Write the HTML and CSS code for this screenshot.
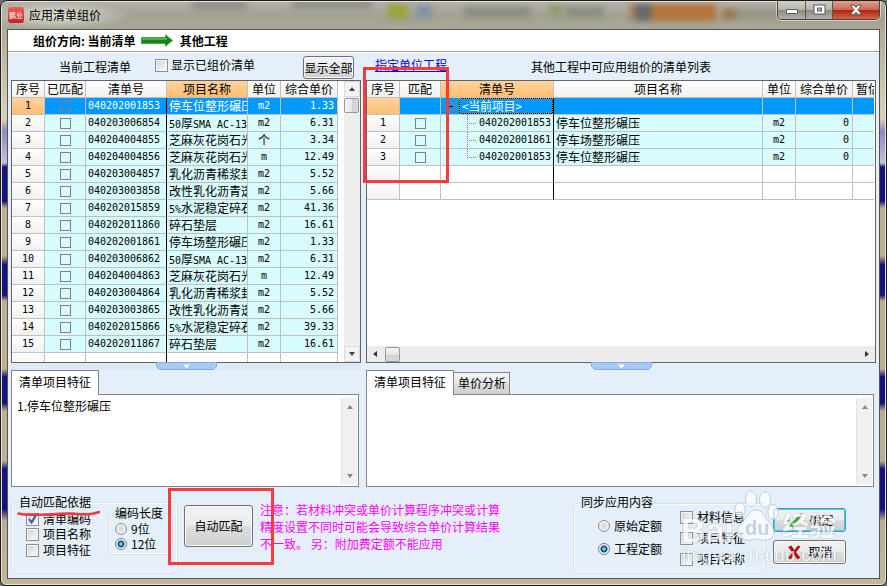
FILE: index.html
```html
<!DOCTYPE html>
<html lang="zh-CN">
<head>
    <meta charset="UTF-8">
    <meta name="viewport" content="width=device-width, initial-scale=1.0">
    <title>应用清单组价</title>
    <link rel="stylesheet" href="styles.css">
</head>
<body>
<div class="window">
    <div class="titlebar">
        <div class="glass">
            <i class="blur b1"></i><i class="blur b2"></i><i class="blur b3"></i><i class="blur b4"></i>
            <i class="blur b5"></i><i class="blur b6"></i><i class="blur b7"></i><i class="blur b8"></i>
            <i class="blur b9"></i>
        </div>
        <span class="app-icon">鹏业</span>
        <span class="title">应用清单组价</span>
        <div class="controls">
            <span class="ctl"><svg width="14" height="12"><rect x="1.5" y="5.5" width="11" height="4" rx="0.5" fill="#fff" stroke="#555b6b"/></svg></span>
            <span class="ctl"><svg width="13" height="12"><rect x="1" y="1" width="11" height="9" fill="#fff" stroke="#555b6b"/><rect x="4.5" y="4" width="4" height="3" fill="#b9b6a8" stroke="#555b6b"/></svg></span>
            <span class="ctl close"><svg width="14" height="12"><path d="M1.5 1h3.6L7 3.4 8.9 1h3.6L9 5.8l3.7 4.9H9L7 8.3l-2 2.4H1.3L5 5.8z" fill="#fff" stroke="#5b4a52"/></svg></span>
        </div>
    </div>

    <div class="client">
        <div class="direction">
            <span>组价方向: 当前清单</span>
            <svg class="arrow" width="32" height="13">
                <path d="M0.5 3.5h24V0.8l7 5.7-7 5.7V9.5h-24z" fill="#178217" stroke="#3f9a3f" stroke-width="0.8"/>
                <path d="M1 5h25" stroke="#8fd08f"/>
            </svg>
            <span>其他工程</span>
        </div>

        <div class="panes">
            <div class="pane">
                <div class="pane-head left-head">
                    <span class="caption">当前工程清单</span>
                    <label class="check-label"><i class="cb"></i>显示已组价清单</label>
                    <span class="btn show-all">显示全部</span>
                </div>
                <div class="grid">
                    <div class="rows left-rows">
                        <div class="row head"><b>序号</b><b>已匹配</b><b>清单号</b><b class="hot">项目名称</b><b>单位</b><b>综合单价</b></div>
                        <div class="row sel"><b>1</b><s><i class="box"></i></s><s class="code">040202001853</s><s class="name">停车位整形碾压</s><s class="unit">m2</s><s class="num">1.33</s></div>
                        <div class="row"><b>2</b><s><i class="box"></i></s><s class="code">040203006854</s><s class="name"><u>50</u>厚<u>SMA AC-13</u></s><s class="unit">m2</s><s class="num">6.31</s></div>
                        <div class="row"><b>3</b><s><i class="box"></i></s><s class="code">040204004855</s><s class="name">芝麻灰花岗石光面</s><s class="unit cn">个</s><s class="num">3.34</s></div>
                        <div class="row"><b>4</b><s><i class="box"></i></s><s class="code">040204004856</s><s class="name">芝麻灰花岗石光面</s><s class="unit">m</s><s class="num">12.49</s></div>
                        <div class="row"><b>5</b><s><i class="box"></i></s><s class="code">040203004857</s><s class="name">乳化沥青稀浆封层</s><s class="unit">m2</s><s class="num">5.52</s></div>
                        <div class="row"><b>6</b><s><i class="box"></i></s><s class="code">040203003858</s><s class="name">改性乳化沥青透层</s><s class="unit">m2</s><s class="num">5.66</s></div>
                        <div class="row"><b>7</b><s><i class="box"></i></s><s class="code">040202015859</s><s class="name"><u>5%</u>水泥稳定碎石</s><s class="unit">m2</s><s class="num">41.36</s></div>
                        <div class="row"><b>8</b><s><i class="box"></i></s><s class="code">040202011860</s><s class="name">碎石垫层</s><s class="unit">m2</s><s class="num">16.61</s></div>
                        <div class="row"><b>9</b><s><i class="box"></i></s><s class="code">040202001861</s><s class="name">停车场整形碾压</s><s class="unit">m2</s><s class="num">1.33</s></div>
                        <div class="row"><b>10</b><s><i class="box"></i></s><s class="code">040203006862</s><s class="name"><u>50</u>厚<u>SMA AC-13</u></s><s class="unit">m2</s><s class="num">6.31</s></div>
                        <div class="row"><b>11</b><s><i class="box"></i></s><s class="code">040204004863</s><s class="name">芝麻灰花岗石光面</s><s class="unit">m</s><s class="num">12.49</s></div>
                        <div class="row"><b>12</b><s><i class="box"></i></s><s class="code">040203004864</s><s class="name">乳化沥青稀浆封层</s><s class="unit">m2</s><s class="num">5.52</s></div>
                        <div class="row"><b>13</b><s><i class="box"></i></s><s class="code">040203003865</s><s class="name">改性乳化沥青透层</s><s class="unit">m2</s><s class="num">5.66</s></div>
                        <div class="row"><b>14</b><s><i class="box"></i></s><s class="code">040202015866</s><s class="name"><u>5%</u>水泥稳定碎石</s><s class="unit">m2</s><s class="num">39.33</s></div>
                        <div class="row"><b>15</b><s><i class="box"></i></s><s class="code">040202011867</s><s class="name">碎石垫层</s><s class="unit">m2</s><s class="num">16.61</s></div>
                        <div class="row empty"><b></b><s></s><s class="code"></s><s></s><s></s><s></s></div>
                    </div>
                    <div class="vscroll">
                        <span class="sbtn"><i class="up"></i></span>
                        <span class="thumb"></span>
                        <span class="sbtn end"><i class="down"></i></span>
                    </div>
                </div>
                <div class="split tint"><svg width="61" height="8"><path d="M0.5 0.5h60v4l-3 3h-54l-3-3z" fill="#a9cbf3" stroke="#7eaee6"/><path d="M27 2.5h7l-3.5 4z" fill="#fff"/></svg></div>
                <div class="tabs"><span class="tab on">清单项目特征</span></div>
                <div class="memo left-memo">
                    <p>1.停车位整形碾压</p>
                    <div class="mscroll"><i class="up"></i><i class="down"></i></div>
                </div>
            </div>

            <div class="pane">
                <div class="pane-head right-head">
                    <span class="link">指定单位工程</span>
                    <span class="caption">其他工程中可应用组价的清单列表</span>
                </div>
                <div class="grid right-grid">
                    <div class="rows right-rows">
                        <div class="row head"><b>序号</b><b>匹配</b><b class="hot">清单号</b><b>项目名称</b><b>单位</b><b>综合单价</b><b class="cut">暂估</b></div>
                        <div class="row sel"><b></b><s></s><s class="code root"><i class="minus"></i><em>&lt;当前项目&gt;</em></s><s></s><s></s><s></s><s></s></div>
                        <div class="row"><b>1</b><s><i class="box"></i></s><s class="code leaf">040202001853</s><s class="name">停车位整形碾压</s><s class="unit">m2</s><s class="num">0</s><s></s></div>
                        <div class="row"><b>2</b><s><i class="box"></i></s><s class="code leaf">040202001861</s><s class="name">停车场整形碾压</s><s class="unit">m2</s><s class="num">0</s><s></s></div>
                        <div class="row"><b>3</b><s><i class="box"></i></s><s class="code leaf last">040202001853</s><s class="name">停车位整形碾压</s><s class="unit">m2</s><s class="num">0</s><s></s></div>
                        <div class="row empty"><b></b><s></s><s class="code"></s><s></s><s></s><s></s><s></s></div>
                        <div class="row empty"><b></b><s></s><s class="code"></s><s></s><s></s><s></s><s></s></div>
                    </div>
                    <div class="hscroll"><i class="left"></i><span class="hthumb"></span><i class="right"></i></div>
                </div>
                <div class="split"><svg width="61" height="8"><path d="M0.5 0.5h60v4l-3 3h-54l-3-3z" fill="#a9cbf3" stroke="#7eaee6"/><path d="M27 2.5h7l-3.5 4z" fill="#fff"/></svg></div>
                <div class="tabs"><span class="tab on">清单项目特征</span><span class="tab off">单价分析</span></div>
                <div class="memo right-memo">
                    <p></p>
                    <div class="mscroll"><i class="up"></i><i class="down"></i></div>
                </div>
            </div>
        </div>

        <div class="footer">
            <div class="group basis">
                <span class="legend">自动匹配依据</span>
                <div class="checks">
                    <label><i class="cb"><svg width="11" height="11"><path d="M2 5l2.6 3.4L8.8 1.6" fill="none" stroke="#3c5aa6" stroke-width="2"/></svg></i>清单编码</label>
                    <label><i class="cb"></i>项目名称</label>
                    <label><i class="cb"></i>项目特征</label>
                </div>
                <div class="group length">
                    <span class="legend">编码长度</span>
                    <label><i class="rb"></i>9位</label>
                    <label><i class="rb on"></i>12位</label>
                </div>
            </div>
            <span class="btn auto">自动匹配</span>
            <p class="note">注意：若材料冲突或单价计算程序冲突或计算<br>精度设置不同时可能会导致综合单价计算结果<br>不一致。 另：附加费定额不能应用</p>
            <div class="group sync">
                <span class="legend">同步应用内容</span>
                <div class="radios">
                    <label><i class="rb"></i>原始定额</label>
                    <label><i class="rb on"></i>工程定额</label>
                </div>
                <div class="options">
                    <label><i class="cb"></i>材料信息</label>
                    <label><i class="cb"></i>项目特征</label>
                    <label><i class="cb"></i>项目名称</label>
                </div>
            </div>
            <div class="actions">
                <span class="btn ok"><svg width="17" height="15"><path d="M1 8.5l3-1.8 2.4 3.1L15 0.5l1.2 0.6L7.2 14H5.4z" fill="#16b41c" stroke="#0a7a10" stroke-width="0.6"/></svg>确定</span>
                <span class="btn cancel"><svg width="15" height="15"><path d="M1 2l3.5-1.5L7.3 5 11 0.5l2.5 1L9 7.2l4.4 5.6-3 1.7-3.2-4.8-3.4 4.8-2.8-1.6L5.4 7.4z" fill="#b40d12"/></svg>取消</span>
            </div>
        </div>
    </div>

    <div class="mark mark-match"></div>
    <div class="mark mark-auto"></div>
    <svg class="mark-line" width="84" height="8"><path d="M1.5 4.5C7 6.5 18 5.8 30 5.6S48 4 56 4.6s16 2.4 26-1.6" fill="none" stroke="#f8383c" stroke-width="2.6" stroke-linecap="round"/></svg>

    <div class="watermark">
        <svg width="46" height="54">
            <g fill="#fff" stroke="#b4c0cc">
                <ellipse cx="17" cy="9" rx="5.5" ry="8"/>
                <ellipse cx="31" cy="9.5" rx="5.5" ry="8"/>
                <ellipse cx="6" cy="20" rx="5.2" ry="7.5"/>
                <ellipse cx="39" cy="22" rx="5.2" ry="7.5"/>
                <path d="M22 20c7 0 8 7 13 12 6 5 8 17-2 18-5 1-8-1-11-1s-7 2-12 1C1 48 2 37 8 32s7-12 14-12z"/>
            </g>
        </svg>
        <span class="wm-bai">Bai</span><span class="wm-du">du</span><span class="wm-jy">经验</span>
        <span class="wm-url">jingyan.baidu.com</span>
    </div>
</div>
</body>
</html>
```
FILE: styles.css
```css
* {
    box-sizing: border-box;
}

body {
    margin: 0;
    width: 887px;
    height: 586px;
    overflow: hidden;
    background: #6d6e70;
    font: 12px/16px "Noto Sans CJK SC", sans-serif;
    color: #000;
}

i, em {
    font-style: normal;
}

b {
    font-weight: normal;
}

s, u {
    text-decoration: none;
}

.window {
    position: relative;
    width: 887px;
    height: 586px;
    padding: 0 6px;
    border: 1px solid #1c1c1c;
    border-radius: 7px 7px 6px 6px;
    box-shadow: inset 0 0 0 1px #e4e2da;
    overflow: hidden;
    background: linear-gradient(#a5a493 0, #b1ad99 30px, #c9c5ae 85px, #d9d3b4 118px, #8d88c4 130px, #c3c0da 162px, #15117e 166px, #15117e 200px, #bcae90 207px, #bcae90 255px, #15117e 264px, #15117e 294px, #bcae90 300px, #bcae90 368px, #15117e 376px, #15117e 402px, #bcae90 410px, #bcae90 460px, #15117e 468px, #15117e 508px, #bcae90 520px, #bfb497 570px, #c2b799 100%);
}

/* title bar */
.titlebar {
    display: flex;
    height: 28px;
}

.glass {
    position: absolute;
    left: 1px;
    top: 1px;
    right: 1px;
    height: 27px;
    overflow: hidden;
    background: linear-gradient(#b4b2ab, #a3a294 50%, #a8a898);
}

.glass::before {
    content: "";
    position: absolute;
    left: -20px;
    top: 0;
    width: 150px;
    height: 27px;
    background: radial-gradient(ellipse, rgba(235, 235, 228, 0.85), rgba(235, 235, 228, 0) 70%);
}

.blur {
    position: absolute;
    top: 5px;
    height: 10px;
    filter: blur(3px);
    background: #8b8a80;
}

.b1 { left: 190px; width: 55px; top: 0; height: 7px; }
.b2 { left: 290px; width: 80px; top: -2px; height: 8px; }
.b3 { left: 386px; width: 20px; top: 2px; height: 15px; background: #9aa33c; }
.b4 { left: 414px; width: 16px; top: 3px; height: 13px; background: #8294a6; }
.b5 { left: 462px; width: 66px; }
.b6 { left: 548px; width: 12px; top: 3px; background: #8e9862; }
.b7 { left: 564px; width: 38px; }
.b8 { left: 628px; width: 86px; top: 2px; height: 17px; background: linear-gradient(90deg, #a97c50 0 4px, #62676d 7px 18px, #b5743a 24px); }
.b9 { left: 720px; width: 60px; top: 7px; background: linear-gradient(90deg, #9b7446 0 12px, #999588 16px); }

.app-icon {
    position: relative;
    width: 16px;
    height: 16px;
    margin: 6px 0 0 1px;
    border-radius: 3px;
    background: linear-gradient(#f05f5b, #c71e22);
    color: #fff;
    font-size: 7px;
    line-height: 16px;
    text-align: center;
    white-space: nowrap;
}

.title {
    position: relative;
    margin: 6px 0 0 5px;
}

.controls {
    position: relative;
    display: flex;
    width: 103px;
    height: 19px;
    margin: 0 0 0 auto;
    border: 1px solid #494641;
    border-top: 0;
    border-radius: 0 0 5px 5px;
    box-shadow: 0 0 0 1px rgba(255, 255, 255, 0.5);
    overflow: hidden;
}

.ctl {
    display: flex;
    width: 28px;
    align-items: center;
    justify-content: center;
    border-right: 1px solid #5c5953;
    background: linear-gradient(#d0cec7, #b7b4aa 48%, #8d8a80 52%, #b5b2a7);
}

.ctl:nth-child(2) {
    width: 27px;
}

.close {
    flex: 1;
    border-right: 0;
    background: linear-gradient(#dfa08f, #cc6a55 48%, #b2270f 52%, #d5624a);
}

.client {
    height: 550px;
    border: 1px solid #55544e;
    background: #e5effa;
}

.direction {
    display: flex;
    height: 23px;
    padding-left: 25px;
    background: #fff;
    border-bottom: 1px solid #fff;
    box-shadow: inset 0 -1px 0 #a0a0a0;
    font-weight: bold;
    line-height: 21px;
}

.arrow {
    margin: 4px 7px 0 5px;
}

/* two halves */
.panes {
    display: grid;
    grid-template-columns: 350px 510px;
    column-gap: 5px;
    padding-left: 3px;
}

.pane-head {
    display: flex;
    height: 27px;
}

.caption {
    padding-top: 6px;
}

.left-head .caption {
    margin-left: 48px;
}

.right-head .caption {
    margin-left: 84px;
}

.check-label {
    display: flex;
    gap: 3px;
    margin: 4px 0 0 24px;
}

.check-label .cb {
    margin-top: 2px;
}

.cb {
    flex: none;
    width: 13px;
    height: 13px;
    border: 1px solid #8e8f8f;
    background: linear-gradient(135deg, #cbcfd5, #f6f6f6 80%);
    box-shadow: inset 0 0 0 1px #f4f4f4;
}

.cb svg {
    display: block;
}

.btn {
    display: flex;
    align-items: center;
    justify-content: center;
    border: 1px solid #707070;
    border-radius: 3px;
    background: linear-gradient(#f2f2f2, #ebebeb 49%, #dddddd 51%, #cfcfcf);
    box-shadow: inset 0 0 0 1px #fafafa;
    white-space: nowrap;
}

.show-all {
    width: 51px;
    height: 23px;
    margin: 3px 7px 0 auto;
}

.link {
    height: 16px;
    margin: 4px 0 0 9px;
    color: #0000ff;
    text-decoration: underline;
}

/* data grids */
.grid {
    display: flex;
    height: 283px;
    border: 1px solid #646464;
    background: #fff;
    overflow: hidden;
}

.right-grid {
    flex-direction: column;
}

.rows {
    overflow: hidden;
}

.row {
    display: grid;
    height: 17px;
}

.left-rows .row {
    grid-template-columns: 33px 41px 81px 81px 33px 57px;
}

.left-rows {
    width: 332px;
}

.right-rows .row {
    grid-template-columns: 33px 41px 113px 209px 33px 57px 21px;
}

.row b, .row s {
    height: 17px;
    border-right: 1px solid #c0c0c0;
    border-bottom: 1px solid #c0c0c0;
    line-height: 16px;
    text-align: center;
    white-space: nowrap;
    overflow: hidden;
}

.row b {
    background: linear-gradient(#fff, #f0f0f0);
    font-family: "DejaVu Sans Mono", "Noto Sans CJK SC", monospace;
    font-size: 10px;
}

.row.head b {
    font-family: "Noto Sans CJK SC", sans-serif;
    font-size: 12px;
    line-height: 16px;
}

.row s {
    background: #d8fbfe;
}

.row.head .hot, .row.sel b {
    background: linear-gradient(#ffd49c, #ffbe72);
}

.row.sel s {
    background: #0099ff;
    color: #fff;
}

.row.empty s {
    background: #fff;
}

.row .code {
    padding-left: 2px;
    text-align: left;
    border-right-color: #000;
}

.row .code, .row .unit, .row .num, .row u {
    font-family: "DejaVu Sans Mono", "Noto Sans CJK SC", monospace;
    font-size: 10px;
    letter-spacing: -0.02px;
}

.row .cn {
    font-family: "Noto Sans CJK SC", sans-serif;
    font-size: 12px;
}

.row .name {
    padding-left: 2px;
    text-align: left;
    line-height: 16px;
}

.row .num {
    padding-right: 3px;
    text-align: right;
}

.row .cut {
    padding-left: 3px;
    text-align: left;
    border-right: 0;
}

.row s:nth-child(7) {
    border-right: 0;
}

.box {
    display: block;
    width: 11px;
    height: 11px;
    margin: 3px auto 0;
    border: 1px solid #808080;
}

.row .root {
    display: flex;
    padding: 0 0 0 5px;
    font-family: "Noto Sans CJK SC", sans-serif;
    font-size: 12px;
}

.root em {
    flex: 1;
    height: 16px;
    margin-left: 4px;
    padding-left: 2px;
    border: 1px dotted #ff7a1a;
    background: linear-gradient(#0099ff, #0099ff) padding-box, linear-gradient(#111, #111) border-box;
    line-height: 14px;
    letter-spacing: -0.3px;
}

.minus {
    width: 9px;
    height: 9px;
    margin-top: 4px;
    border: 1px solid #808080;
    background: linear-gradient(#111, #111) center / 4px 1px no-repeat;
}

.row .leaf {
    padding-left: 38px;
    background-image:
        repeating-linear-gradient(90deg, #808080 0 1px, transparent 1px 2px),
        repeating-linear-gradient(#808080 0 1px, transparent 1px 2px);
    background-repeat: no-repeat;
    background-size: 10px 1px, 1px 17px;
    background-position: 26px 8px, 26px 0;
}

.row .last {
    background-size: 10px 1px, 1px 9px;
}

/* scroll bars */
.vscroll {
    display: flex;
    flex-direction: column;
    width: 16px;
    background: #eee;
}

.sbtn {
    display: flex;
    align-items: center;
    justify-content: center;
    height: 16px;
    border: 1px solid #dcdcdc;
    background: #f2f2f2;
}

.end {
    margin-top: auto;
}

.thumb {
    width: 15px;
    height: 15px;
    margin-top: 1px;
    border: 1px solid #979797;
    border-radius: 2px;
    background: linear-gradient(90deg, #f5f5f5, #e6e6e6 50%, #cfcfcf 52%, #dcdcdc);
}

.up, .down {
    border: 3px solid transparent;
    border-top: 0;
    border-bottom: 4px solid #444;
}

.down {
    border: 3px solid transparent;
    border-bottom: 0;
    border-top: 4px solid #444;
}

.hscroll {
    display: flex;
    align-items: center;
    height: 16px;
    margin-top: auto;
    padding: 0 6px;
    background: #ececec;
}

.left, .right {
    border: 3px solid transparent;
    border-left: 0;
    border-right: 4px solid #333;
}

.right {
    margin-left: auto;
    border: 3px solid transparent;
    border-right: 0;
    border-left: 4px solid #333;
}

.hthumb {
    width: 15px;
    height: 15px;
    margin-left: 8px;
    border: 1px solid #979797;
    border-radius: 2px;
    background: linear-gradient(#f5f5f5, #e6e6e6 50%, #cfcfcf 52%, #dcdcdc);
}

.split {
    display: flex;
    height: 7px;
    justify-content: center;
}

.split svg {
    flex: none;
    margin-top: -1px;
}

.tint {
    background: #dceaf8;
}

/* tabs and text boxes */
.tabs {
    display: flex;
    height: 24px;
    align-items: flex-end;
}

.tab {
    border: 1px solid #82838f;
    border-bottom: 0;
    white-space: nowrap;
}

.tab.on {
    position: relative;
    width: 88px;
    height: 25px;
    margin-bottom: -1px;
    padding: 3px 0 0 7px;
    background: #fff;
}

.tab.off {
    width: 56px;
    height: 22px;
    padding: 2px 0 0 4px;
    border-left: 0;
    background: linear-gradient(#f3f3f3, #ebebeb 49%, #dddddd 51%, #d0d0d0);
}

.memo {
    display: flex;
    justify-content: space-between;
    height: 93px;
    border: 1px solid #82838f;
    background: #fff;
}

.left-memo {
    width: 348px;
}

.right-memo {
    width: 508px;
}

.memo p {
    margin: 3px 0 0 5px;
}

.mscroll {
    display: flex;
    flex-direction: column;
    align-items: center;
    justify-content: space-between;
    width: 16px;
    margin: 3px 1px 2px 0;
    padding: 7px 0 6px;
    background: #f0f0f0;
    border-left: 1px solid #e2e2e2;
}

.mscroll .up {
    border-bottom-color: #868686;
}

.mscroll .down {
    border-top-color: #868686;
}

/* bottom options */
.footer {
    display: flex;
    align-items: flex-start;
    padding-left: 3px;
}

.group {
    display: flex;
    border: 1px solid #d5dfe5;
    border-radius: 4px;
    box-shadow: inset 0 0 0 1px #f8fbfe;
}

.group label {
    display: flex;
    height: 16px;
    gap: 4px;
    white-space: nowrap;
}

.group label .cb, .group label .rb {
    margin-top: 2px;
}

.legend {
    height: 16px;
    background: #e5effa;
    white-space: nowrap;
}

.basis {
    width: 167px;
    height: 72px;
    margin-top: 15px;
}

.basis > .legend {
    width: 72px;
    margin: -9px -79px 0 7px;
}

.checks {
    width: 82px;
    margin: 8px 0 0 14px;
}

.checks label:nth-child(2) {
    margin-top: -1px;
}

.length {
    width: 65px;
    height: 42px;
    margin-top: 10px;
    flex-direction: column;
}

.length .legend {
    width: 48px;
    margin: -9px 0 0 6px;
}

.length label {
    height: 15px;
    margin-left: 6px;
}

.length .rb {
    margin-top: 3px;
}

.rb {
    flex: none;
    width: 12px;
    height: 12px;
    border: 1px solid #8e8f8f;
    border-radius: 50%;
    background: radial-gradient(circle, #d0d4d8, #f5f5f5 75%);
}

.rb.on {
    border-color: #6f7f8c;
    background: radial-gradient(circle, #6fd0f0 0 1px, #12506e 2.5px 3px, #f3f3f3 4px);
}

.auto {
    width: 69px;
    height: 42px;
    margin: 18px 0 0 6px;
}

.note {
    width: 250px;
    margin: 14px 0 0 7px;
    color: #ff00ff;
    line-height: 17px;
    white-space: nowrap;
}

.sync {
    width: 193px;
    height: 71px;
    margin: 16px 0 0 63px;
}

.sync .legend {
    width: 72px;
    margin: -10px -79px 0 7px;
}

.radios {
    width: 82px;
    margin: 14px 0 0 24px;
}

.radios .rb {
    margin-top: 3px;
}

.radios label + label {
    margin-top: 7px;
}

.options {
    margin-top: 5px;
}

.options label + label {
    margin-top: 5px;
}

.actions {
    margin: 21px 0 0 7px;
}

.actions .btn {
    width: 73px;
    height: 24px;
    gap: 6px;
    padding-left: 1px;
}

.actions .ok {
    border-color: #3c9cc0;
    box-shadow: inset 0 0 0 1px #4cc8ee;
}

.actions .cancel {
    margin-top: 8px;
}

/* red callouts drawn over the dialog */
.mark {
    position: absolute;
    border: 3px solid #fb3b3b;
}

.mark-match {
    left: 362px;
    top: 66px;
    width: 86px;
    height: 116px;
}

.mark-auto {
    left: 167px;
    top: 487px;
    width: 106px;
    height: 77px;
}

.mark-line {
    position: absolute;
    left: 16px;
    top: 508px;
}

.watermark {
    position: absolute;
    left: 680px;
    top: 489px;
    width: 165px;
    height: 78px;
    opacity: 0.72;
    color: #fff;
    font-family: "Liberation Sans", "Noto Sans CJK SC", sans-serif;
    font-weight: bold;
    text-shadow: 0 0 2px #8f9eae;
}

.watermark svg, .watermark span {
    position: absolute;
}

.watermark svg {
    left: 53px;
    top: 0;
}

.wm-bai {
    left: 0;
    top: 23px;
    font-size: 34px;
    line-height: 34px;
}

.watermark .wm-du {
    left: 64px;
    top: 28px;
    color: #b9c7d8;
    font-size: 20px;
    line-height: 20px;
    text-shadow: none;
}

.wm-jy {
    left: 101px;
    top: 22px;
    font-size: 27px;
    line-height: 30px;
    white-space: nowrap;
}

.wm-url {
    left: 1px;
    top: 55px;
    font-size: 18px;
    line-height: 20px;
    letter-spacing: 0.6px;
    font-weight: normal;
}
```
